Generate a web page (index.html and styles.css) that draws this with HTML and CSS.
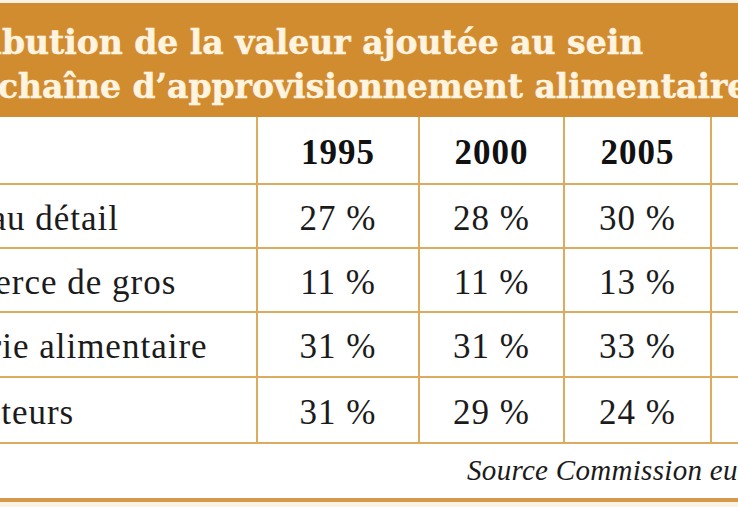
FILE: index.html
```html
<!DOCTYPE html>
<html lang="fr">
<head>
<meta charset="utf-8">
<title>Distribution de la valeur ajoutée</title>
<link rel="stylesheet" href="styles.css">
</head>
<body>
<div class="sheet">
  <div class="title">
    <span class="title-line">Distribution de la valeur ajoutée au sein</span>
    <span class="title-line">de la chaîne d’approvisionnement alimentaire</span>
  </div>
  <div class="grid">
    <div class="cell label"></div>
    <div class="cell year">1995</div>
    <div class="cell year">2000</div>
    <div class="cell year">2005</div>
    <div class="cell year"></div>

    <div class="cell label">Vente au détail</div>
    <div class="cell">27 %</div>
    <div class="cell">28 %</div>
    <div class="cell">30 %</div>
    <div class="cell"></div>

    <div class="cell label">Commerce de gros</div>
    <div class="cell">11 %</div>
    <div class="cell">11 %</div>
    <div class="cell">13 %</div>
    <div class="cell"></div>

    <div class="cell label">Industrie alimentaire</div>
    <div class="cell">31 %</div>
    <div class="cell">31 %</div>
    <div class="cell">33 %</div>
    <div class="cell"></div>

    <div class="cell label">Producteurs</div>
    <div class="cell">31 %</div>
    <div class="cell">29 %</div>
    <div class="cell">24 %</div>
    <div class="cell"></div>
  </div>
  <div class="source">Source Commission européenne</div>
  <div class="rule"></div>
</div>
</body>
</html>
```

FILE: styles.css
```css
html, body {
  overflow: hidden;
}

body {
  margin: 0;
  background: #faf2e4;
  font-family: "Liberation Serif", "Times New Roman", serif;
  color: #1b1b1b;
}

.sheet {
  width: 977px;
  margin-left: -120px;
  padding-top: 3px;
}

.title {
  display: flex;
  flex-direction: column;
  background: #d28c30;
  color: #fff4e0;
  font-family: "DejaVu Serif", Georgia, serif;
  font-weight: bold;
  font-size: 33px;
  line-height: 44px;
  padding: 18px 0 8px 17px;
  white-space: nowrap;
  -webkit-text-stroke: 0.5px #fff4e0;
}

.grid {
  display: grid;
  grid-template-columns: 376px 160px 143px 145px 145px;
  grid-template-rows: 66px 62px 62px 63px 64px;
  gap: 2px;
  padding-bottom: 2px;
  background: #dcab5e;
}

.cell {
  background: #ffffff;
  display: flex;
  align-items: center;
  justify-content: center;
  padding-top: 5px;
  font-size: 35px;
  letter-spacing: 1px;
  white-space: nowrap;
}

.cell.label {
  justify-content: flex-start;
  padding-left: 16px;
}

.cell.year {
  font-weight: bold;
  color: #111111;
  padding-top: 6px;
}

.source {
  background: #ffffff;
  height: 54px;
  box-sizing: border-box;
  padding: 10px 10px 0 0;
  text-align: right;
  font-style: italic;
  font-size: 29px;
  line-height: 32px;
  letter-spacing: 0.3px;
  white-space: nowrap;
}

.rule {
  height: 4px;
  background: #d59a47;
}
```
